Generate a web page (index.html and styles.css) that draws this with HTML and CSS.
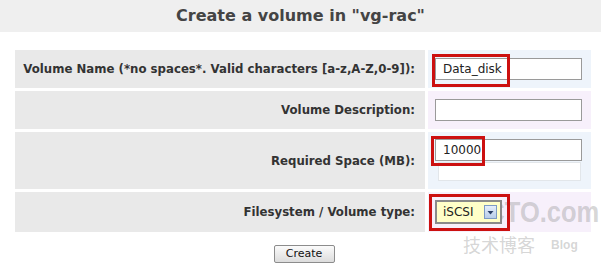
FILE: index.html
```html
<!DOCTYPE html>
<html>
<head>
    <title>Create a volume</title>
    <link rel="stylesheet" href="styles.css">
</head>
<body>
    <div class="page-title">Create a volume in "vg-rac"</div>

    <form class="volume-form">
        <table class="form-table">
            <tr class="row-name">
                <td class="label-cell">Volume Name (*no spaces*. Valid characters [a-z,A-Z,0-9]):</td>
                <td class="field-cell cell-blue">
                    <div class="mark-wrap">
                        <input type="text" class="text-input" value="Data_disk">
                        <span class="mark mark-name"></span>
                    </div>
                </td>
            </tr>
            <tr class="row-desc">
                <td class="label-cell">Volume Description:</td>
                <td class="field-cell cell-violet">
                    <input type="text" class="text-input">
                </td>
            </tr>
            <tr class="row-size">
                <td class="label-cell">Required Space (MB):</td>
                <td class="field-cell cell-blue">
                    <div class="mark-wrap">
                        <input type="text" class="text-input" value="10000">
                        <span class="mark mark-size"></span>
                    </div>
                    <div class="ghost-box"></div>
                </td>
            </tr>
            <tr class="row-type">
                <td class="label-cell">Filesystem / Volume type:</td>
                <td class="field-cell cell-violet">
                    <div class="mark-wrap on-top">
                        <div class="fake-select">
                            <span class="select-value">iSCSI</span>
                            <span class="select-arrow">
                                <svg width="9" height="9" viewBox="0 0 9 9"><path d="M1.5 3 L7.5 3 L4.5 6.5 Z" fill="#2a3f66"/></svg>
                            </span>
                        </div>
                        <span class="mark mark-type"></span>
                    </div>
                </td>
            </tr>
        </table>
        <div class="form-actions">
            <button type="button" class="create-btn">Create</button>
        </div>
    </form>

    <div class="watermark">
        <div class="wm-big">51CTO.com</div>
        <div class="wm-small">技术博客 <span class="wm-blog">Blog</span></div>
    </div>
</body>
</html>
```

FILE: styles.css
```css
body {
    margin: 0;
    font-family: "DejaVu Sans", Verdana, sans-serif;
    background-color: white;
    position: relative;
    width: 601px;
    height: 268px;
    overflow: hidden;
}
.page-title {
    height: 32px;
    line-height: 32px;
    background-color: #efefef;
    text-align: center;
    font-size: 16px;
    font-weight: bold;
    color: #444;
}
.volume-form {
    margin: 15px 0 0 12px;
}
.form-table {
    border-spacing: 3px;
    border-collapse: separate;
    table-layout: fixed;
}
.form-table td {
    padding: 0;
}
.label-cell {
    width: 400px;
    background-color: #e9e9e9;
    text-align: right;
    font-size: 11.75px;
    font-weight: bold;
    color: #333;
    padding-right: 10px !important;
    white-space: nowrap;
}
.field-cell {
    width: 156px;
    padding-left: 7px !important;
}
.cell-blue {
    background-color: #eef4fb;
}
.cell-violet {
    background-color: #f7f0fb;
}
.row-name td, .row-desc td {
    height: 38px;
}
.row-size td {
    height: 57px;
}
.row-size .field-cell {
    height: 50px;
    vertical-align: top;
    padding-top: 7px !important;
}
.row-type td {
    height: 40px;
}
.text-input {
    display: block;
    width: 147px;
    height: 22px;
    margin: 0;
    box-sizing: border-box;
    border: 1px solid #9a9a9a;
    padding: 2px 7px;
    font-family: "DejaVu Sans", Verdana, sans-serif;
    font-size: 12px;
    color: #222;
    background: white;
}
.ghost-box {
    width: 143px;
    height: 19px;
    box-sizing: border-box;
    margin: 1px 0 0 3px;
    border: 1px solid #e2e6ea;
    background-color: white;
}
.mark-wrap {
    position: relative;
    width: fit-content;
}
.on-top {
    z-index: 2;
}
.mark {
    position: absolute;
    border: 3px solid #cc1010;
    box-sizing: border-box;
}
.mark-name {
    left: -3px;
    top: -4px;
    width: 78px;
    height: 33px;
}
.mark-size {
    left: -4px;
    top: -3px;
    width: 54px;
    height: 30px;
}
.mark-type {
    left: -6px;
    top: -6px;
    width: 81px;
    height: 37px;
}
.fake-select {
    display: flex;
    align-items: center;
    width: 67px;
    height: 24px;
    box-sizing: border-box;
    border: 2px solid #8a8a8a;
    background-color: #ffffc8;
    padding-left: 6px;
    font-size: 12px;
    color: #222;
}
.select-value {
    flex: 1;
}
.select-arrow {
    display: flex;
    align-items: center;
    justify-content: center;
    width: 13px;
    height: 14px;
    margin-right: 3px;
    border: 1px solid #7d9bc4;
    background: linear-gradient(#e4eefb, #b8cde9);
    box-sizing: border-box;
}
.form-actions {
    text-align: center;
    margin-top: 7px;
    padding-right: 5px;
}
.create-btn {
    width: 61px;
    height: 18px;
    padding: 0;
    font-family: "DejaVu Sans", Verdana, sans-serif;
    font-size: 11px;
    color: #111;
    border: 1px solid #8c8c8c;
    border-radius: 2px;
    background: linear-gradient(#fbfbfb, #dcdcdc);
}
.watermark {
    position: absolute;
    z-index: 1;
    left: 458px;
    top: 196px;
    color: rgba(150, 150, 150, 0.4);
    pointer-events: none;
}
.wm-big {
    font-family: "Liberation Sans", Arial, sans-serif;
    font-size: 30px;
    font-weight: bold;
    line-height: 32px;
    transform: scaleX(0.85);
    transform-origin: left;
}
.wm-small {
    margin: 6px 0 0 5px;
    font-family: "Noto Sans CJK SC", sans-serif;
    font-size: 18px;
    line-height: 20px;
}
.wm-blog {
    font-family: "Liberation Sans", Arial, sans-serif;
    font-size: 12px;
    font-weight: bold;
    margin-left: 12px;
    vertical-align: 3px;
}
```
